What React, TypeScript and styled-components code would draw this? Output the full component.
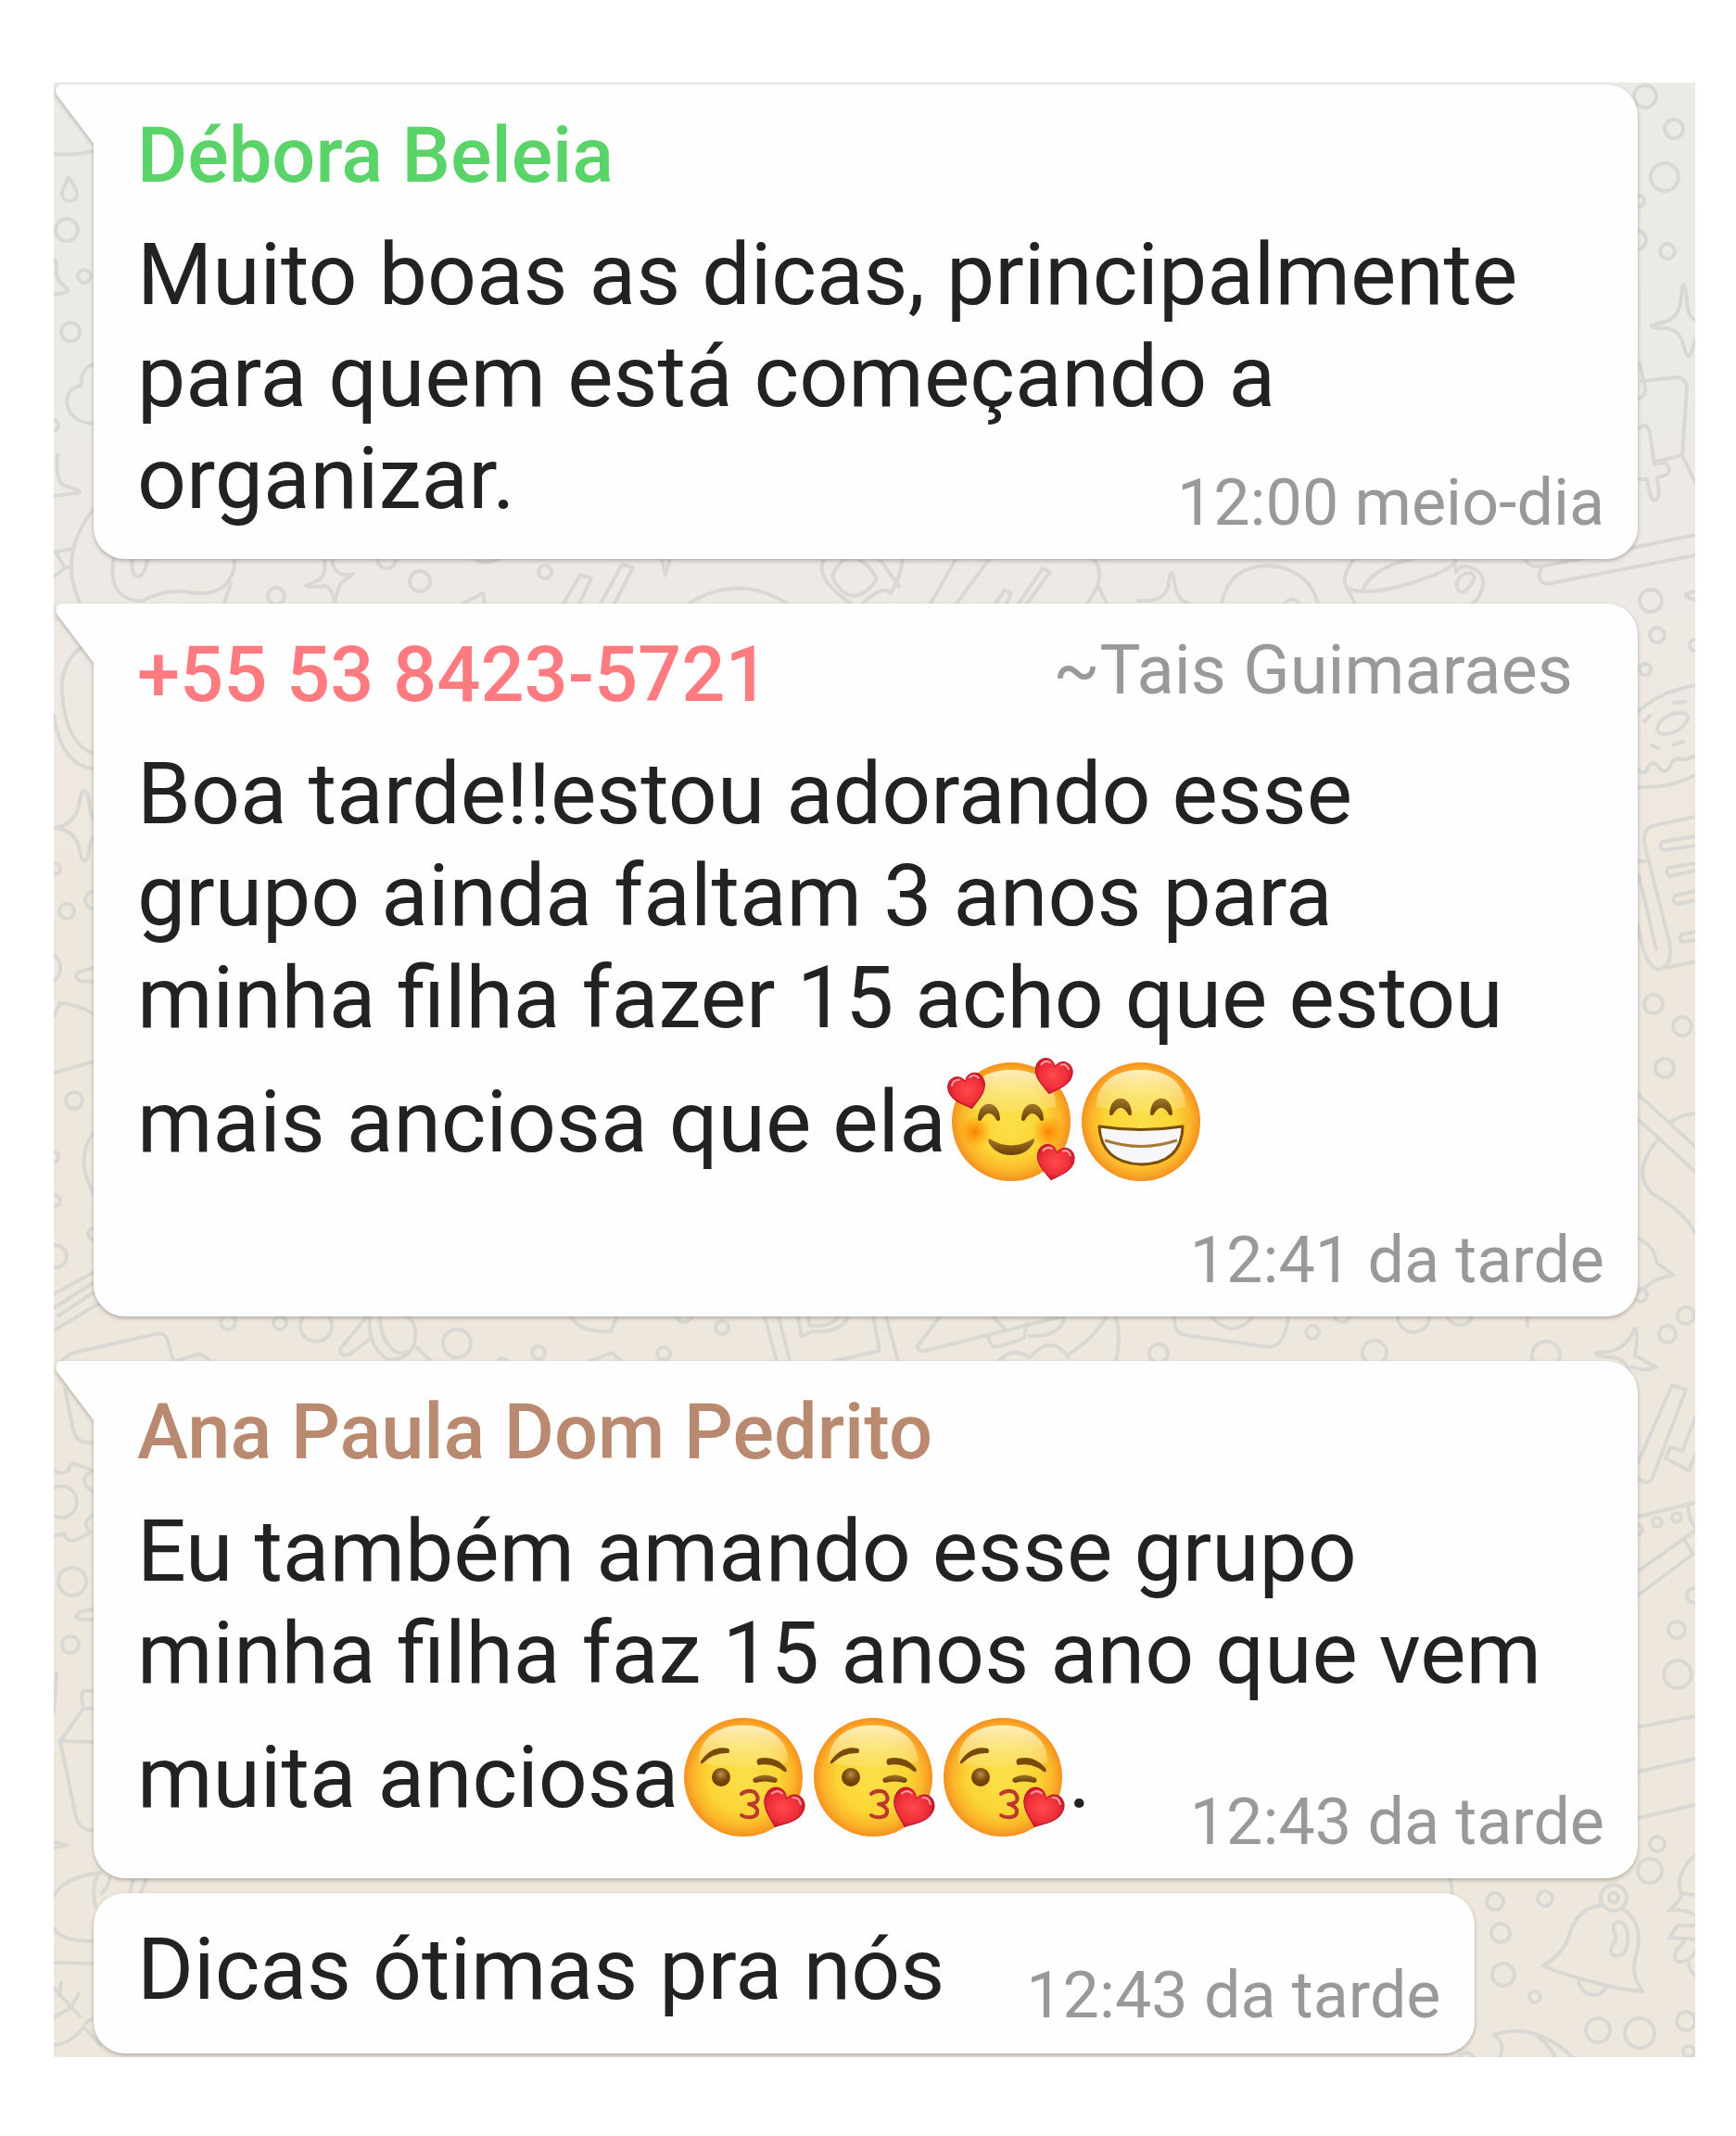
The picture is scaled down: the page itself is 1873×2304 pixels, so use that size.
import React from 'react';
import styled, { createGlobalStyle } from 'styled-components';

const GlobalStyle = createGlobalStyle`
  body {
    margin: 0;
    background: #ffffff;
    font-family: Roboto, "Noto Sans", sans-serif;
  }
`;

const Page = styled.main`
  padding: 89px 44px 84px 58px;
`;

const Chat = styled.section`
  position: relative;
  overflow: hidden;
  padding: 2px 62px 4px 43px;
  background: linear-gradient(#eaeae6 0, #edeae5 500px, #eee7dd 900px);
`;

const Wallpaper = styled.svg`
  position: absolute;
  top: 0;
  left: 0;
  width: 100%;
  height: 100%;
  fill: none;
  stroke: #dad8d4;
  stroke-width: 4;
  stroke-linecap: round;
  stroke-linejoin: round;
`;

const MessageList = styled.ol`
  position: relative;
  display: flex;
  flex-direction: column;
  align-items: flex-start;
  margin: 0;
  padding: 0;
  list-style: none;
`;

const Bubble = styled.li<{ $grouped?: boolean }>`
  position: relative;
  box-sizing: border-box;
  width: ${(p) => (p.$grouped ? 'auto' : '100%')};
  margin-top: ${(p) => (p.$grouped ? 16 : 48)}px;
  padding: ${(p) => (p.$grouped ? '28px 36px 22px 47px' : '29px 36px 20px 47px')};
  border-radius: ${(p) => (p.$grouped ? '34px' : '0 34px 34px 34px')};
  background: #fefefe;
  filter: drop-shadow(0 2px 2px rgba(70, 65, 55, 0.36));

  &:first-child {
    margin-top: 0;
  }
`;

const Tail = styled.svg`
  position: absolute;
  top: 0;
  left: -42px;
  width: 44px;
  height: 66px;
  fill: #fefefe;
`;

const Header = styled.header`
  display: flex;
  justify-content: space-between;
  align-items: flex-start;
  margin-bottom: 26px;
  padding-right: 34px;
`;

const Sender = styled.h2<{ $color: string }>`
  margin: 0;
  color: ${(p) => p.$color};
  font-size: 83px;
  font-weight: 500;
  line-height: 96px;
`;

const PushName = styled.span`
  color: #999999;
  font-size: 74px;
  line-height: 86px;
`;

const Body = styled.div`
  display: grid;
`;

const InlineBody = styled.div`
  display: flex;
  align-items: flex-end;
  gap: 88px;
`;

const Text = styled.p<{ $bottom: number }>`
  grid-area: 1 / 1;
  margin: 0;
  padding: 0 36px ${(p) => p.$bottom}px 0;
  color: #222222;
  font-size: 93px;
  line-height: 110px;
`;

const ShortText = styled(Text)`
  padding-right: 0;
`;

const Time = styled.time`
  grid-area: 1 / 1;
  align-self: end;
  justify-self: end;
  color: #999999;
  font-size: 70px;
  line-height: 82px;
  white-space: nowrap;
`;

const EmojiBox = styled.svg`
  width: 140px;
  height: 156px;
  vertical-align: -46px;
`;

const circles: Array<[number, number, number]> = [
  [72, 248, 12], [91, 298, 7], [76, 358, 10], [57, 459, 6],
  [298, 643, 9], [417, 603, 10], [453, 627, 11], [588, 617, 7],
  [1775, 104, 12], [1806, 139, 10], [1796, 191, 15], [1768, 217, 6], [1766, 259, 10], [1799, 271, 8],
  [1781, 648, 12], [1788, 685, 8], [1775, 722, 6], [1829, 696, 6],
  [1784, 1083, 10], [1815, 1107, 10], [1796, 1152, 10], [1770, 1397, 7], [1819, 1419, 9], [1799, 1439, 9],
  [1668, 1462, 15], [1788, 1642, 5], [1809, 1637, 5], [1767, 1650, 5], [1828, 1721, 8], [1809, 1758, 9],
  [1810, 1806, 15], [1788, 1989, 8], [1780, 2018, 13], [1613, 2051, 9], [1667, 2048, 8], [1619, 2085, 10],
  [1622, 2130, 12], [1656, 2154, 6], [1724, 2190, 13], [1769, 2193, 16], [1819, 2180, 10], [1822, 2213, 6],
  [1741, 2047, 14], [1741, 2047, 5],
  [59, 937, 6], [72, 983, 8], [101, 971, 9], [46, 1044, 19], [80, 1187, 9], [57, 1248, 6], [59, 1295, 6],
  [101, 1331, 6], [60, 1355, 12], [66, 1620, 17], [78, 1706, 15], [76, 1774, 9],
  [246, 1426, 8], [302, 1427, 7], [341, 1430, 17], [493, 1449, 15], [581, 1459, 7], [716, 1460, 7],
  [779, 1432, 7], [738, 1417, 9], [1250, 1460, 10], [1416, 1437, 7], [1448, 1417, 9], [1525, 1420, 17],
  [1483, 1459, 13], [1575, 1414, 15],
];

const strokes: string[] = [
  // left edge
  'M58 166Q80 168 101 163', 'M74 191Q83 205 83 209A8 8 0 0 1 67 209Q67 205 74 191Z',
  'M58 280Q62 282 61 292Q60 302 70 309Q77 314 68 316L58 318',
  'M101 393Q86 398 88 416Q72 418 72 435Q76 456 101 457', 'M62 491Q60 518 68 523L86 530Q86 533 80 532L58 535',
  'M101 549Q62 598 86 650', 'M58 596L77 592M60 595L70 613L58 622M70 613L76 611',
  'M87 699Q66 715 67 745Q70 802 101 813', 'M58 771Q66 826 101 829',
  'M58 893Q84 890 86 862Q91 843 96 862Q96 878 102 884M58 893Q84 895 86 920Q91 938 96 920Q96 908 102 901',
  'M101 1044L86 1048Q78 1053 86 1058L101 1059', 'M58 1096L65 1082Q84 1083 101 1094M58 1157L101 1145',
  'M103 1219Q78 1250 103 1291', 'M58 1396L103 1371M58 1411L103 1382M63 1419L106 1391M58 1435L112 1403',
  'M70 1499L80 1546Q84 1558 102 1556',
  'M58 1586Q66 1592 74 1586Q76 1576 84 1580L100 1586Q86 1594 94 1604L102 1610M102 1633Q86 1642 98 1653L80 1662Q70 1662 70 1654L58 1657',
  'M102 1735L86 1739Q78 1746 88 1747L102 1747M61 1805L58 1847',
  'M102 1824H90Q86 1826 90 1843H102M90 1843L65 1878L102 1879M65 1878L82 1960Q86 1974 102 1975',
  'M58 1987L72 1990L58 1993', 'M108 2020Q70 2024 58 2045M58 2080Q66 2094 102 2094M58 2117L102 2118',
  'M58 2144L86 2175M66 2138L64 2152M85 2150L77 2165L58 2176M58 2206Q78 2204 90 2186L108 2206M100 2177L93 2182',
  'M107 2020Q98 2032 103 2056M118 2026Q118 2034 110 2042M144 2026L140 2042M158 2026L152 2042',
  // below the first bubble
  'M123 600Q114 648 154 648Q176 636 198 638Q228 644 242 632Q256 618 252 600M249 630L242 650M143 600Q140 620 149 622Q156 622 160 600',
  'M350 600Q352 620 345 625L330 632Q342 634 351 632Q360 636 361 652M361 652Q364 634 369 628L381 619Q372 622 366 618Q358 614 358 600',
  'M511 600Q518 612 540 602M499 651L521 640L523 651M608 651L626 620L638 624L625 651M648 651L671 609L683 612L663 651',
  'M714 602L718 620L723 602M743 651Q796 618 849 651M890 602Q876 622 918 651M931 651Q952 630 961 640Q972 622 974 602M948 602L970 632',
  'M898 622Q906 600 922 602Q936 606 946 624Q938 640 920 643Q906 640 898 622',
  'M1032 602L1004 651M1068 602L1032 651M1074 651L1084 636L1091 640L1086 651M1099 651L1125 613L1133 617L1108 651',
  'M1179 602Q1196 620 1173 651M1185 632L1194 651M1228 648Q1260 650 1261 628Q1264 606 1268 632Q1270 648 1283 651',
  'M1318 651Q1326 610 1370 610Q1412 614 1422 651M1386 651Q1394 642 1402 651',
  'M1460 604Q1446 624 1453 634L1462 651M1453 634Q1474 644 1522 629Q1570 614 1571 604M1470 637Q1480 612 1524 603',
  'M1569 603L1571 617Q1576 608 1586 612Q1606 618 1598 638Q1596 646 1588 651M1573 636Q1568 626 1580 619Q1592 616 1590 626Q1580 644 1573 636',
  'M1646 604Q1650 612 1664 611L1829 577M1664 611Q1656 626 1668 630L1829 599',
  // right edge
  'M1829 345Q1820 342 1820 322Q1816 294 1814 320Q1812 344 1796 347L1782 351Q1780 354 1796 354Q1812 354 1817 374Q1822 398 1829 366',
  'M1769 392L1775 418Q1776 428 1768 430M1771 411L1808 407Q1820 408 1820 418L1815 491L1829 521M1786 498L1815 491',
  'M1769 462Q1776 454 1780 466L1785 501L1794 499Q1806 504 1798 512L1788 515L1790 534Q1786 544 1781 536L1777 517L1768 517',
  'M1829 638Q1808 642 1829 647',
  'M1767 768Q1790 746 1829 739M1767 849Q1800 851 1829 836M1767 830Q1774 838 1778 828Q1784 818 1790 828Q1798 838 1804 822Q1810 816 1818 820L1829 815',
  'M1788 786Q1790 774 1808 769Q1826 768 1820 778Q1812 790 1798 792Q1788 792 1788 786M1774 778L1780 772M1806 758L1818 757M1782 804L1790 807M1806 803L1816 800',
  'M1829 881L1782 891Q1770 896 1776 918L1801 1015Q1806 1040 1790 1046Q1774 1044 1767 996M1767 929L1776 929M1768 944L1787 1024M1798 1044L1829 1037',
  'M1829 902L1794 908Q1788 914 1796 917L1829 912M1829 931L1800 936Q1796 942 1802 945L1829 939M1829 961L1808 966Q1802 972 1810 975L1829 971M1829 1005L1814 1008Q1810 1014 1816 1016L1829 1014',
  'M1767 1180L1829 1237M1767 1207L1829 1264M1803 1210Q1814 1202 1829 1201M1788 1230Q1760 1264 1782 1287Q1818 1308 1829 1330M1767 1336Q1786 1344 1787 1362L1805 1375Q1786 1378 1767 1395',
  'M1764 1433Q1754 1460 1722 1459Q1724 1464 1740 1464Q1754 1466 1758 1480M1764 1433Q1768 1436 1764 1462L1787 1475Q1774 1480 1760 1474',
  'M1767 1578L1804 1494L1819 1499L1782 1596Q1778 1602 1767 1595M1829 1529L1815 1565L1802 1561L1797 1573L1822 1586L1829 1570',
  'M1767 1636L1829 1621M1767 1695L1829 1651M1767 1721L1827 1676L1817 1661M1821 1623Q1822 1640 1829 1647',
  'M1767 1863L1829 1851M1767 1911L1829 1897M1767 1961L1829 1947',
  'M1829 2001Q1806 2022 1814 2042L1829 2044M1814 2044Q1812 2052 1800 2061Q1816 2058 1829 2066M1829 2077H1810L1801 2090L1829 2092M1817 2095Q1802 2108 1810 2116Q1820 2118 1829 2106M1822 2115Q1822 2126 1829 2131',
  'M1730 2055Q1704 2056 1694 2084Q1688 2108 1665 2120Q1680 2128 1712 2136Q1744 2146 1772 2148Q1758 2128 1766 2106Q1774 2074 1750 2058M1703 2138Q1708 2152 1720 2152Q1728 2152 1732 2144',
  'M1743 2074Q1756 2070 1756 2090Q1756 2110 1744 2110Q1734 2108 1740 2098Q1746 2090 1741 2082Q1740 2076 1743 2074',
  'M1612 2195Q1654 2180 1697 2219M1652 2192Q1668 2200 1678 2219M1612 2195Q1624 2202 1619 2219M1565 2027L1567 2043M1574 2219Q1582 2210 1590 2219',
  // below the second bubble
  'M66 1468L76 1460L168 1439Q180 1436 182 1450L187 1468M190 1468L212 1461Q222 1461 226 1468',
  'M396 1420L367 1455Q367 1464 377 1461L401 1443M399 1420Q396 1452 418 1466Q444 1468 448 1444Q450 1424 436 1418M410 1420Q410 1444 424 1456Q434 1462 439 1458M449 1453L465 1468',
  'M616 1420Q626 1438 659 1436L666 1420M537 1468Q542 1462 548 1468M637 1468L660 1459L670 1468M825 1420L838 1468M840 1420L852 1468',
  'M861 1420L865 1442L876 1436Q908 1438 915 1420M872 1420L874 1430Q896 1432 905 1420M900 1468L949 1457L942 1420M956 1420L969 1468',
  'M1014 1420L990 1452Q990 1458 998 1457L1145 1420M1071 1420L1084 1433M1065 1440L1071 1453Q1084 1452 1105 1443L1108 1428M1110 1441Q1146 1442 1148 1420',
  'M1078 1468Q1092 1452 1111 1464Q1134 1438 1153 1464M1151 1462Q1180 1444 1194 1420M1204 1420Q1210 1444 1204 1468',
  'M1267 1420Q1266 1438 1278 1440L1370 1453Q1386 1452 1390 1420M1307 1420Q1330 1446 1352 1420M1648 1420V1430',
];

const Doodles = () => (
  <Wallpaper viewBox="58 89 1771 2130" preserveAspectRatio="xMidYMin slice" aria-hidden="true">
    {circles.map(([cx, cy, r]) => (
      <circle key={`${cx}-${cy}-${r}`} cx={cx} cy={cy} r={r} />
    ))}
    {strokes.map((d) => (
      <path key={d} d={d} />
    ))}
  </Wallpaper>
);

const BubbleTail = () => (
  <Tail viewBox="0 0 44 66" aria-hidden="true">
    <path d="M44 0H8C2 0 0 5 2 11L42 64H44Z" />
  </Tail>
);

const PaintSheet = styled.svg`
  position: absolute;
  width: 0;
  height: 0;
`;

const EmojiPaint = () => (
  <PaintSheet aria-hidden="true">
    <defs>
      <radialGradient id="skin" cx="0.5" cy="0.5" r="0.5">
        <stop offset="0" stopColor="#fbe04a" />
        <stop offset="0.6" stopColor="#fbd535" />
        <stop offset="0.84" stopColor="#fbb52a" />
        <stop offset="1" stopColor="#f5911f" />
      </radialGradient>
      <linearGradient id="gloss" x1="0" y1="0" x2="0" y2="1">
        <stop offset="0" stopColor="#fff6cf" stopOpacity="0.9" />
        <stop offset="1" stopColor="#f9e887" stopOpacity="0.35" />
      </linearGradient>
      <radialGradient id="blush">
        <stop offset="0" stopColor="#ff7a00" stopOpacity="0.95" />
        <stop offset="1" stopColor="#ff9500" stopOpacity="0" />
      </radialGradient>
      <radialGradient id="heart" cx="0.5" cy="0.45" r="0.6">
        <stop offset="0" stopColor="#ff4a4a" />
        <stop offset="0.6" stopColor="#f0303a" />
        <stop offset="1" stopColor="#c4122a" />
      </radialGradient>
      <linearGradient id="brown" x1="0" y1="0" x2="0" y2="1">
        <stop offset="0" stopColor="#a0752f" />
        <stop offset="1" stopColor="#6a3f00" />
      </linearGradient>
      <radialGradient id="pupil" cx="0.5" cy="0.35" r="0.6">
        <stop offset="0" stopColor="#b98f52" />
        <stop offset="0.6" stopColor="#7a4a08" />
        <stop offset="1" stopColor="#6a3f00" />
      </radialGradient>
    </defs>
  </PaintSheet>
);

const Heart = ({ x, y, turn, size = 1 }: { x: number; y: number; turn: number; size?: number }) => (
  <g transform={`translate(${x} ${y}) rotate(${turn}) scale(${size})`}>
    <path
      d="M0 19C-7 13 -20 6 -20 -6C-20 -19 -5 -22 0 -11C5 -22 20 -19 20 -6C20 6 7 13 0 19Z"
      fill="url(#heart)"
      stroke="#b3162a"
      strokeWidth="1"
    />
    <path d="M-15 -10Q-12 -16 -6 -14M6 -14Q11 -17 15 -11" fill="none" stroke="#ff9a9a" strokeWidth="2" strokeLinecap="round" />
  </g>
);

const Head = () => (
  <>
    <circle cx="70" cy="78" r="64" fill="url(#skin)" />
    <path d="M22 62C22 34 44 22 70 22S118 34 118 62Q70 72 22 62Z" fill="url(#gloss)" />
  </>
);

const ArcEye = ({ x, y }: { x: number; y: number }) => (
  <path
    d={`M${x - 12} ${y + 8}C${x - 12} ${y - 15} ${x + 12} ${y - 15} ${x + 12} ${y + 8}Q${x + 9} ${y + 11} ${x + 7} ${y + 6}Q${x} ${y - 4} ${x - 7} ${y + 6}Q${x - 9} ${y + 11} ${x - 12} ${y + 8}Z`}
    fill="url(#brown)"
  />
);

const LovedFace = () => (
  <EmojiBox viewBox="0 0 140 156" role="img" aria-label="🥰">
    <Head />
    <circle cx="31" cy="89" r="18" fill="url(#blush)" />
    <circle cx="110" cy="89" r="18" fill="url(#blush)" />
    <ArcEye x={46} y={68} />
    <ArcEye x={93} y={68} />
    <path d="M46 96Q70 111 94 96Q96 97 94 101Q86 114 70 114Q54 114 46 101Q45 97 46 96Z" fill="url(#brown)" />
    <Heart x={23} y={45} turn={-14} />
    <Heart x={115} y={29} turn={12} />
    <Heart x={117} y={122} turn={12} />
  </EmojiBox>
);

const GrinFace = () => (
  <EmojiBox viewBox="0 0 140 156" role="img" aria-label="😁">
    <Head />
    <ArcEye x={48} y={62} />
    <ArcEye x={92} y={62} />
    <path d="M25 83Q70 90 115 83Q114 123 70 124Q27 122 25 83Z" fill="#f7f7fa" stroke="#7a4e08" strokeWidth="3" strokeLinejoin="round" />
    <path d="M31 98Q70 111 109 98" fill="none" stroke="#a77b35" strokeWidth="3" />
  </EmojiBox>
);

const KissFace = () => (
  <EmojiBox viewBox="0 0 140 156" role="img" aria-label="😘">
    <Head />
    <path d="M24 61Q36 43 54 47Q56 50 54 52Q38 51 26 63Q23 64 24 61Z" fill="#7a4a08" />
    <path d="M86 58Q104 54 116 68Q118 73 114 72Q102 62 86 65Q83 61 86 58Z" fill="#7a4a08" />
    <circle cx="46" cy="78" r="10" fill="url(#pupil)" />
    <path d="M81 79Q93 72 106 79Q108 83 104 84Q93 81 83 84Q79 83 81 79Z" fill="url(#brown)" />
    <path
      d="M68 96Q74 91 82 94Q88 100 84 105Q80 107 76 107Q82 108 85 113Q86 120 79 121Q72 122 68 119"
      fill="none"
      stroke="#b93a2c"
      strokeWidth="4"
      strokeLinecap="round"
      strokeLinejoin="round"
    />
    <Heart x={112} y={112} turn={22} size={1.1} />
  </EmojiBox>
);

const App = () => (
  <>
    <GlobalStyle />
    <EmojiPaint />
    <Page>
      <Chat>
        <Doodles />
        <MessageList>
          <Bubble>
            <BubbleTail />
            <Header>
              <Sender $color="#5ad469">Débora Beleia</Sender>
            </Header>
            <Body>
              <Text $bottom={11}>
                Muito boas as dicas, principalmente para quem está começando a organizar.
              </Text>
              <Time>12:00 meio-dia</Time>
            </Body>
          </Bubble>
          <Bubble>
            <BubbleTail />
            <Header>
              <Sender $color="#ff7b80">+55 53 8423-5721</Sender>
              <PushName>~Tais Guimaraes</PushName>
            </Header>
            <Body>
              <Text $bottom={112}>
                Boa tarde!!estou adorando esse grupo ainda faltam 3 anos para minha filha fazer 15
                acho que estou mais anciosa que ela
                <LovedFace />
                <GrinFace />
              </Text>
              <Time>12:41 da tarde</Time>
            </Body>
          </Bubble>
          <Bubble>
            <BubbleTail />
            <Header>
              <Sender $color="#b98a70">Ana Paula Dom Pedrito</Sender>
            </Header>
            <Body>
              <Text $bottom={11}>
                Eu também amando esse grupo minha filha faz 15 anos ano que vem muita anciosa
                <KissFace />
                <KissFace />
                <KissFace />.
              </Text>
              <Time>12:43 da tarde</Time>
            </Body>
          </Bubble>
          <Bubble $grouped>
            <InlineBody>
              <ShortText $bottom={13}>Dicas ótimas pra nós</ShortText>
              <Time>12:43 da tarde</Time>
            </InlineBody>
          </Bubble>
        </MessageList>
      </Chat>
    </Page>
  </>
);

export default App;
